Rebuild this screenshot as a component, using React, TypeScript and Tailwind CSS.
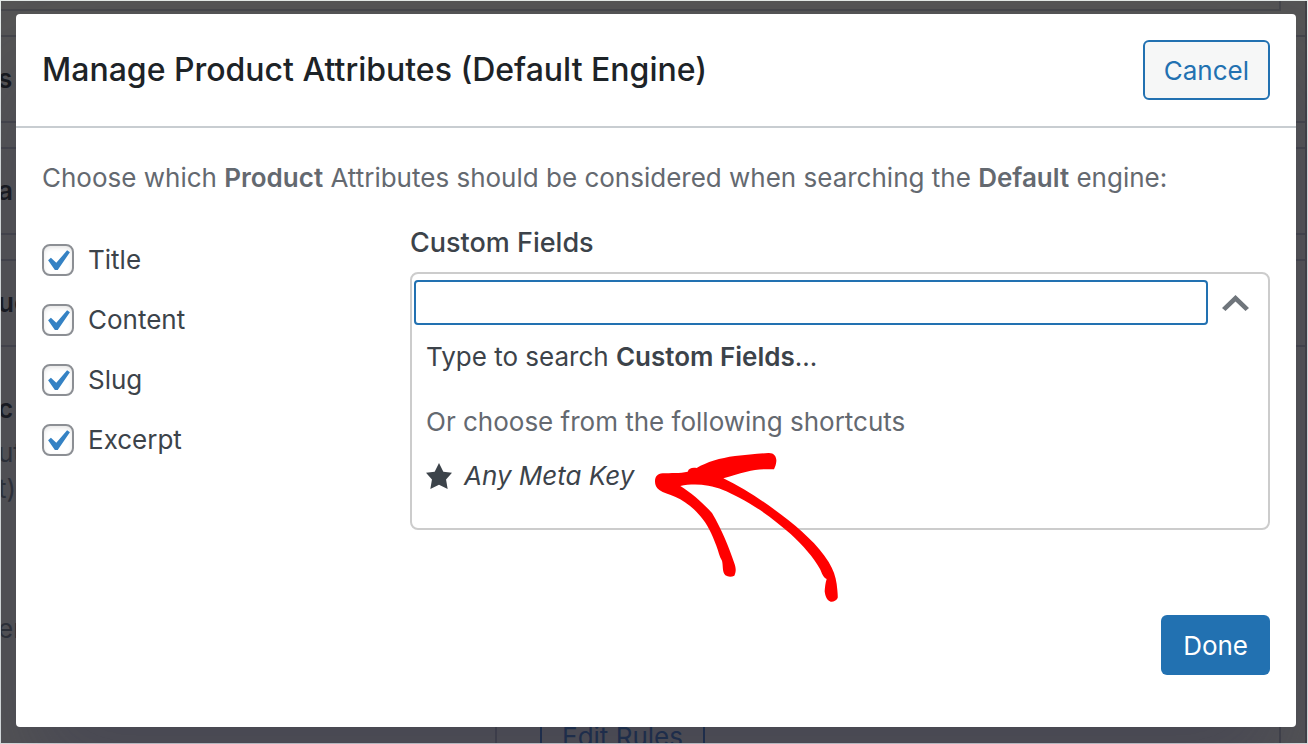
import { useState } from "react";

const attributes = ["Title", "Content", "Slug", "Excerpt"];
const cards = ["s", "a", "uc"];

function CheckOption({ label }: { label: string }) {
  const [checked, setChecked] = useState(true);
  return (
    <label className="flex items-center gap-[14px] text-[26px] leading-8 text-[#3c434a]">
      <span className="grid size-8 flex-none grid-cols-[32px] grid-rows-[32px]">
        <input
          type="checkbox"
          checked={checked}
          onChange={(e) => setChecked(e.target.checked)}
          className="col-start-1 row-start-1 size-8 appearance-none rounded-lg border-2 border-[#8c8f94] bg-white shadow-[inset_0_2px_4px_rgba(0,0,0,0.1)]"
        />
        {checked && (
          <svg viewBox="0.5 -0.5 20 20" className="pointer-events-none col-start-1 row-start-1 -m-[5px] size-[42px] max-w-none" fill="#3582c4" aria-hidden="true">
            <path d="M14.83 4.89l1.34.94-5.81 8.38H9.02L5.78 9.67l1.34-1.25 2.57 2.4z" />
          </svg>
        )}
      </span>
      {label}
    </label>
  );
}

function Arrow() {
  return (
    <svg viewBox="42 66 555 453" className="pointer-events-none absolute -top-2 left-full ml-5 h-[151px] w-[185px] max-w-none" fill="#ff0000" aria-hidden="true">
      <path d="M45 155C45 140 52 131 68 130C92 128 120 131 143 125C147 115 155 112 170 114C200 96 240 84 285 78C320 74 355 71 385 69C402 68 410 80 409 94C408 104 406 110 402 118C375 116 345 119 320 125C295 131 272 138 250 145C310 174 370 213 425 255C480 297 535 345 566 396C580 419 587 440 590 462C592 480 594 495 593 504C588 513 580 516 572 515C561 511 556 500 554 484C555 470 556 460 560 447C548 441 546 430 540 417C520 381 488 345 452 312C405 270 350 230 298 203C262 184 235 172 205 167C175 162 145 163 121 168C155 189 190 220 216 249C246 300 266 350 283 400C288 415 289 424 283 437C275 441 264 441 256 436C246 424 250 408 246 392C238 380 236 364 229 347C216 312 202 282 180 257C158 231 133 212 105 200C88 193 70 189 58 180C49 172 45 165 45 155Z" />
    </svg>
  );
}

function PageBehind() {
  return (
    <div aria-hidden="true" className="absolute inset-0 flex flex-col overflow-hidden border-r-2 border-[#424246] bg-[#555555] text-[26px] leading-9 text-[#2c3035]">
      <div className="mr-6 h-[10px] border-r-2 border-b-2 border-[#47484c]" />
      <div className="mt-6 flex flex-col gap-6 font-semibold text-[#15181b]">
        {cards.map((text) => (
          <div key={text} className="flex h-[88px] items-center border-y-2 border-[#45464b] -indent-[3px]">
            {text}
          </div>
        ))}
      </div>
      <div className="pt-11 -indent-[3px]">
        <p className="font-semibold text-[#15181b]">c</p>
        <p className="pt-2">ut</p>
        <p>t)</p>
        <p className="pt-[104px]">en</p>
      </div>
      <div className="mt-auto mr-6 ml-[494px] flex h-9 items-end border-x-2 border-[#424348] pl-[43px]">
        <span className="h-8 border-x-2 border-[#172d49] px-5 leading-[52px] text-[#172d49]">Edit Rules</span>
      </div>
    </div>
  );
}

export default function App() {
  const [query, setQuery] = useState("");
  return (
    <div className="relative min-h-screen border border-[#e6ecea] font-[Inter,sans-serif]">
      <PageBehind />
      <div className="relative pt-[13px] pr-[11px] pb-[15px] pl-[15px]">
        <section
          role="dialog"
          aria-labelledby="dialog-title"
          className="rounded-sm bg-white pb-[52px] shadow-[0_60px_100px_rgba(50,50,80,0.35)]"
        >
          <header className="flex items-center justify-between border-b-2 border-[#c8cdd1] p-[26px]">
            <h1 id="dialog-title" className="text-[32px] leading-10 font-medium text-[#1d2327]">
              Manage Product Attributes (Default Engine)
            </h1>
            <button type="button" className="h-[60px] rounded-md border-2 border-[#2271b1] bg-[#f6f7f7] px-[19px] text-[26px] text-[#2271b1]">
              Cancel
            </button>
          </header>
          <div className="px-[26px] pt-[30px]">
            <p className="text-[26px] leading-10 text-[#646970]">
              Choose which <b className="font-semibold">Product</b> Attributes should be considered when searching the{" "}
              <b className="font-semibold">Default</b> engine:
            </p>
            <div className="flex pt-[26px]">
              <div className="flex w-[368px] flex-none flex-col gap-7 pt-5">
                {attributes.map((label) => (
                  <CheckOption key={label} label={label} />
                ))}
              </div>
              <div className="flex-1">
                <label htmlFor="custom-fields" className="block text-[27px] leading-[38px] font-medium text-[#3c434a]">
                  Custom Fields
                </label>
                <div className="mt-[10px] h-[258px] rounded-lg border-2 border-[#cccccc] text-[26px] leading-8">
                  <div className="flex items-center pt-[6px] pr-[19px] pl-[2px]">
                    <input
                      id="custom-fields"
                      type="text"
                      value={query}
                      onChange={(e) => setQuery(e.target.value)}
                      className="h-[45px] min-w-0 flex-1 rounded border-2 border-[#2271b1] bg-white px-3 text-[#3c434a] outline-none"
                    />
                    <button type="button" aria-label="Close options" className="ml-[14px]">
                      <svg viewBox="0 0 27 16" className="h-4 w-[27px]" fill="#6f757b" aria-hidden="true">
                        <path d="M13.5 0L27 13L23.5 16L13.5 6.5L3.5 16L0 13Z" />
                      </svg>
                    </button>
                  </div>
                  <div className="flex flex-col items-start px-[14px] pt-4">
                    <p className="text-[#3c434a]">
                      Type to search <b className="font-semibold">Custom Fields</b>...
                    </p>
                    <p className="pt-[33px] text-[#646970]">Or choose from the following shortcuts</p>
                    <div className="relative mt-[22px]">
                      <button type="button" className="flex items-center gap-3 text-[#3c434a] italic">
                        <svg viewBox="1 1 18 18" className="size-[26px]" fill="currentColor" aria-hidden="true">
                          <path d="M10 1l3 6 6 .75-4.12 4.62L16 19l-6-3-6 3 1.13-6.63L1 7.75 7 7z" />
                        </svg>
                        Any Meta Key
                      </button>
                      <Arrow />
                    </div>
                  </div>
                </div>
              </div>
            </div>
            <footer className="flex justify-end pt-[85px]">
              <button type="button" className="h-[60px] rounded-md bg-[#2271b1] px-[22px] text-[26px] text-white">
                Done
              </button>
            </footer>
          </div>
        </section>
      </div>
    </div>
  );
}
